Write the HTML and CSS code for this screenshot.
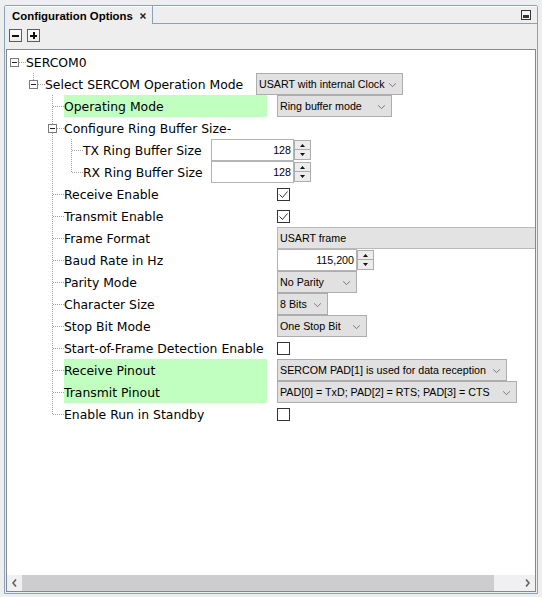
FILE: index.html
```html
<!DOCTYPE html>
<html>
<head>
<meta charset="utf-8">
<link rel="stylesheet" href="styles.css">
</head>
<body>
<div class="window">
  <div class="tabbar">
    <div class="tab">
      <span class="tab-title">Configuration Options</span>
      <svg class="tab-close" width="6" height="6" viewBox="0 0 6 6"><path d="M0.5 0.5L5.5 5.5M5.5 0.5L0.5 5.5" stroke="#222" stroke-width="1.5"/></svg>
    </div>
    <div class="tabrest">
      <svg class="minbtn" width="10" height="10" viewBox="0 0 10 10"><rect x="0.5" y="0.5" width="9" height="9" fill="#f4f4f4" stroke="#333"/><rect x="2" y="5" width="6" height="3" fill="#333"/></svg>
    </div>
  </div>
  <div class="toolbar">
    <div class="tbtn"><span class="tb-h"></span></div>
    <div class="tbtn plus"><span class="tb-h"></span><span class="tb-v"></span></div>
  </div>
  <div class="treebox">
    <div class="viewport">
      <!-- row 0 -->
      <div class="row">
        <div class="cell root"><span class="exp"></span></div>
        <span class="lbl">SERCOM0</span>
      </div>
      <!-- row 1 -->
      <div class="row">
        <div class="cell"></div>
        <div class="cell elbow"><span class="exp"></span></div>
        <span class="lbl w1">Select SERCOM Operation Mode</span>
        <div class="combo cw-select"><span class="ctext">USART with internal Clock</span><svg class="chev" width="7" height="4" viewBox="0 0 7 4"><path d="M0 0.2L3.5 3.7L7 0.2" fill="none" stroke="#777" stroke-width="1"/></svg></div>
      </div>
      <!-- row 2 -->
      <div class="row">
        <div class="cell"></div><div class="cell"></div>
        <div class="cell tee"></div>
        <span class="lbl w2 hl">Operating Mode</span>
        <div class="combo cw-ring"><span class="ctext">Ring buffer mode</span><svg class="chev" width="7" height="4" viewBox="0 0 7 4"><path d="M0 0.2L3.5 3.7L7 0.2" fill="none" stroke="#777" stroke-width="1"/></svg></div>
      </div>
      <!-- row 3 -->
      <div class="row">
        <div class="cell"></div><div class="cell"></div>
        <div class="cell tee"><span class="exp"></span></div>
        <span class="lbl">Configure Ring Buffer Size-</span>
      </div>
      <!-- row 4 -->
      <div class="row">
        <div class="cell"></div><div class="cell"></div><div class="cell v"></div>
        <div class="cell tee"></div>
        <span class="lbl w3">TX Ring Buffer Size</span>
        <div class="spin">
          <div class="sfield fw-ring">128</div>
          <div class="sbtns">
            <div class="sbtn"><svg width="5" height="3" viewBox="0 0 5 3"><path d="M2.5 0L5 3H0Z" fill="#111"/></svg></div>
            <div class="sbtn"><svg width="5" height="3" viewBox="0 0 5 3"><path d="M0 0H5L2.5 3Z" fill="#111"/></svg></div>
          </div>
        </div>
      </div>
      <!-- row 5 -->
      <div class="row">
        <div class="cell"></div><div class="cell"></div><div class="cell v"></div>
        <div class="cell elbow"></div>
        <span class="lbl w3">RX Ring Buffer Size</span>
        <div class="spin">
          <div class="sfield fw-ring">128</div>
          <div class="sbtns">
            <div class="sbtn"><svg width="5" height="3" viewBox="0 0 5 3"><path d="M2.5 0L5 3H0Z" fill="#111"/></svg></div>
            <div class="sbtn"><svg width="5" height="3" viewBox="0 0 5 3"><path d="M0 0H5L2.5 3Z" fill="#111"/></svg></div>
          </div>
        </div>
      </div>
      <!-- row 6 -->
      <div class="row">
        <div class="cell"></div><div class="cell"></div>
        <div class="cell tee"></div>
        <span class="lbl w2">Receive Enable</span>
        <div class="check"><svg width="11" height="11" viewBox="0 0 11 11"><path d="M1.5 5.5L4.5 8.5L9.5 2.5" fill="none" stroke="#333" stroke-width="1"/></svg></div>
      </div>
      <!-- row 7 -->
      <div class="row">
        <div class="cell"></div><div class="cell"></div>
        <div class="cell tee"></div>
        <span class="lbl w2">Transmit Enable</span>
        <div class="check"><svg width="11" height="11" viewBox="0 0 11 11"><path d="M1.5 5.5L4.5 8.5L9.5 2.5" fill="none" stroke="#333" stroke-width="1"/></svg></div>
      </div>
      <!-- row 8 -->
      <div class="row">
        <div class="cell"></div><div class="cell"></div>
        <div class="cell tee"></div>
        <span class="lbl w2">Frame Format</span>
        <div class="rofield">USART frame</div>
      </div>
      <!-- row 9 -->
      <div class="row">
        <div class="cell"></div><div class="cell"></div>
        <div class="cell tee"></div>
        <span class="lbl w2">Baud Rate in Hz</span>
        <div class="spin">
          <div class="sfield fw-baud">115,200</div>
          <div class="sbtns">
            <div class="sbtn"><svg width="5" height="3" viewBox="0 0 5 3"><path d="M2.5 0L5 3H0Z" fill="#111"/></svg></div>
            <div class="sbtn"><svg width="5" height="3" viewBox="0 0 5 3"><path d="M0 0H5L2.5 3Z" fill="#111"/></svg></div>
          </div>
        </div>
      </div>
      <!-- row 10 -->
      <div class="row">
        <div class="cell"></div><div class="cell"></div>
        <div class="cell tee"></div>
        <span class="lbl w2">Parity Mode</span>
        <div class="combo cw-parity"><span class="ctext">No Parity</span><svg class="chev" width="7" height="4" viewBox="0 0 7 4"><path d="M0 0.2L3.5 3.7L7 0.2" fill="none" stroke="#777" stroke-width="1"/></svg></div>
      </div>
      <!-- row 11 -->
      <div class="row">
        <div class="cell"></div><div class="cell"></div>
        <div class="cell tee"></div>
        <span class="lbl w2">Character Size</span>
        <div class="combo cw-char"><span class="ctext">8 Bits</span><svg class="chev" width="7" height="4" viewBox="0 0 7 4"><path d="M0 0.2L3.5 3.7L7 0.2" fill="none" stroke="#777" stroke-width="1"/></svg></div>
      </div>
      <!-- row 12 -->
      <div class="row">
        <div class="cell"></div><div class="cell"></div>
        <div class="cell tee"></div>
        <span class="lbl w2">Stop Bit Mode</span>
        <div class="combo cw-stop"><span class="ctext">One Stop Bit</span><svg class="chev" width="7" height="4" viewBox="0 0 7 4"><path d="M0 0.2L3.5 3.7L7 0.2" fill="none" stroke="#777" stroke-width="1"/></svg></div>
      </div>
      <!-- row 13 -->
      <div class="row">
        <div class="cell"></div><div class="cell"></div>
        <div class="cell tee"></div>
        <span class="lbl w2">Start-of-Frame Detection Enable</span>
        <div class="check"></div>
      </div>
      <!-- row 14 -->
      <div class="row">
        <div class="cell"></div><div class="cell"></div>
        <div class="cell tee"></div>
        <span class="lbl w2 hl">Receive Pinout</span>
        <div class="combo cw-rx"><span class="ctext">SERCOM PAD[1] is used for data reception</span><svg class="chev" width="7" height="4" viewBox="0 0 7 4"><path d="M0 0.2L3.5 3.7L7 0.2" fill="none" stroke="#777" stroke-width="1"/></svg></div>
      </div>
      <!-- row 15 -->
      <div class="row">
        <div class="cell"></div><div class="cell"></div>
        <div class="cell tee"></div>
        <span class="lbl w2 hl">Transmit Pinout</span>
        <div class="combo cw-tx"><span class="ctext">PAD[0] = TxD; PAD[2] = RTS; PAD[3] = CTS</span><svg class="chev" width="7" height="4" viewBox="0 0 7 4"><path d="M0 0.2L3.5 3.7L7 0.2" fill="none" stroke="#777" stroke-width="1"/></svg></div>
      </div>
      <!-- row 16 -->
      <div class="row">
        <div class="cell"></div><div class="cell"></div>
        <div class="cell elbow"></div>
        <span class="lbl w2">Enable Run in Standby</span>
        <div class="check"></div>
      </div>
    </div>
    <div class="hscroll">
      <div class="sb-btn sb-left"><svg width="5" height="8" viewBox="0 0 5 8"><path d="M4 0.5L1 4L4 7.5" fill="none" stroke="#606060" stroke-width="1.6"/></svg></div>
      <div class="sb-track"><div class="sb-thumb"></div></div>
      <div class="sb-btn sb-right"><svg width="5" height="8" viewBox="0 0 5 8"><path d="M1 0.5L4 4L1 7.5" fill="none" stroke="#606060" stroke-width="1.6"/></svg></div>
    </div>
  </div>
</div>
</body>
</html>
```

FILE: styles.css
```css
html, body {
  margin: 0;
  padding: 0;
  background: #eeeeee;
}
body {
  width: 542px;
  height: 597px;
  overflow: hidden;
  font-family: "DejaVu Sans", sans-serif;
}

.window {
  margin: 5px 0 0 4px;
  width: 534px;
  height: 589px;
  box-sizing: border-box;
  border: 1px solid #8aa1ba;
  border-radius: 2px 2px 0 0;
  display: flex;
  flex-direction: column;
  background: #eeeeee;
}

/* ---------- tab bar ---------- */
.tabbar {
  display: flex;
  height: 18px;
  flex: none;
  box-shadow: inset 0 1px 0 #ffffff;
}
.tab {
  width: 140px;
  padding-left: 7px;
  border-right: 1px solid #8aa1ba;
  display: flex;
  align-items: center;
  font-family: "Liberation Sans", Arial, sans-serif;
  font-weight: bold;
  font-size: 11.4px;
  color: #000;
  white-space: nowrap;
}
.tab-title {
  padding-top: 1px;
}
.tab-close {
  margin-left: 7px;
  margin-top: 1px;
}
.tabrest {
  flex: 1;
  border-bottom: 1px solid #8aa1ba;
  display: flex;
  justify-content: flex-end;
  align-items: flex-start;
  padding-right: 6px;
}
.minbtn {
  margin-top: 4px;
}

/* ---------- toolbar ---------- */
.toolbar {
  height: 25px;
  flex: none;
  box-sizing: border-box;
  padding: 5px 0 0 4px;
  display: flex;
  gap: 5px;
  align-items: flex-start;
}
.tbtn {
  width: 13px;
  height: 13px;
  box-sizing: border-box;
  border: 1px solid #5c5c5c;
  background: linear-gradient(#ffffff, #ececec);
  display: grid;
  place-items: center;
}
.tbtn > span {
  grid-area: 1 / 1;
  background: #111;
}
.tb-h {
  width: 7px;
  height: 2px;
}
.tb-v {
  width: 2px;
  height: 7px;
}

/* ---------- tree box ---------- */
.treebox {
  flex: 1;
  min-height: 0;
  margin: 0 1px 1px 1px;
  border: 1px solid #828790;
  display: flex;
  flex-direction: column;
  background: #ffffff;
}
.viewport {
  flex: 1;
  min-height: 0;
  overflow: hidden;
  padding-top: 1px;
}
.row {
  display: flex;
  height: 22px;
  align-items: center;
  white-space: nowrap;
}
.cell {
  width: 19px;
  height: 22px;
  flex: none;
  display: flex;
  align-items: flex-start;
}
.cell.v {
  background: repeating-linear-gradient(to bottom, #a0a0a0 0 1px, transparent 1px 2px) 7px 0 / 1px 22px no-repeat;
}
.cell.tee {
  background:
    repeating-linear-gradient(to right, #a0a0a0 0 1px, transparent 1px 2px) 8px 11px / 11px 1px no-repeat,
    repeating-linear-gradient(to bottom, #a0a0a0 0 1px, transparent 1px 2px) 7px 0 / 1px 22px no-repeat;
}
.cell.elbow {
  background:
    repeating-linear-gradient(to right, #a0a0a0 0 1px, transparent 1px 2px) 8px 11px / 11px 1px no-repeat,
    repeating-linear-gradient(to bottom, #a0a0a0 0 1px, transparent 1px 2px) 7px 0 / 1px 12px no-repeat;
}
.cell.root {
  background: repeating-linear-gradient(to right, #a0a0a0 0 1px, transparent 1px 2px) 8px 11px / 11px 1px no-repeat;
}
.exp {
  width: 9px;
  height: 9px;
  box-sizing: border-box;
  margin: 7px 0 0 3px;
  border: 1px solid #7b7b7b;
  background: linear-gradient(#222, #222) center / 5px 1px no-repeat, #ffffff;
}

.lbl {
  flex: none;
  height: 22px;
  line-height: 22px;
  padding-top: 1px;
  box-sizing: border-box;
  font-family: "DejaVu Sans", sans-serif;
  font-size: 12.4px;
  color: #000;
}
.lbl.w1 { width: 199px; margin-right: 12px; }
.lbl.w2 { width: 203px; margin-right: 10px; }
.lbl.w3 { width: 117px; margin-right: 11px; }
.lbl.hl { background: #c0ffc0; }

/* ---------- controls ---------- */
.combo, .sfield, .rofield {
  font-family: "Liberation Sans", Arial, sans-serif;
  font-size: 10.7px;
  color: #000;
}
.combo {
  flex: none;
  height: 22px;
  box-sizing: border-box;
  border: 1px solid #adadad;
  background: #e1e1e1;
  display: flex;
  align-items: center;
  padding: 0 6px 0 2px;
}
.ctext {
  flex: 1;
  overflow: hidden;
}
.chev {
  flex: none;
  margin-left: 4px;
  margin-top: 1px;
}
.cw-select { width: 147px; }
.cw-ring { width: 115px; }
.cw-parity { width: 80px; }
.cw-char { width: 51px; }
.cw-stop { width: 90px; }
.cw-rx { width: 230px; }
.cw-tx { width: 240px; }

.spin {
  flex: none;
  display: flex;
  height: 22px;
}
.sfield {
  height: 22px;
  box-sizing: border-box;
  border: 1px solid #b4b4b4;
  background: #ffffff;
  text-align: right;
  padding-right: 2px;
  line-height: 20px;
}
.fw-ring { width: 83px; }
.fw-baud { width: 80px; }
.sbtns {
  width: 17px;
  display: flex;
  flex-direction: column;
  padding: 1px 0;
  box-sizing: border-box;
  gap: 0;
}
.sbtn {
  height: 10px;
  box-sizing: border-box;
  border: 1px solid #acacac;
  background: #ececec;
  display: flex;
  align-items: center;
  justify-content: center;
}
.sbtn + .sbtn {
  border-top: none;
  height: 10px;
}

.check {
  flex: none;
  width: 13px;
  height: 13px;
  box-sizing: border-box;
  border: 1px solid #333333;
  background: #ffffff;
  display: flex;
  align-items: center;
  justify-content: center;
}

.rofield {
  flex: none;
  width: 320px;
  height: 22px;
  box-sizing: border-box;
  border: 1px solid #b9b9b9;
  background: #e3e3e3;
  padding-left: 2px;
  line-height: 20px;
}

/* ---------- scrollbar ---------- */
.hscroll {
  flex: none;
  height: 16px;
  display: flex;
  background: #f0f0f0;
}
.sb-btn {
  width: 15px;
  display: flex;
  align-items: center;
  justify-content: center;
}
.sb-right {
  width: 16px;
}
.sb-track {
  flex: 1;
  display: flex;
}
.sb-thumb {
  width: 472px;
  background: #cdcdcd;
}
```
